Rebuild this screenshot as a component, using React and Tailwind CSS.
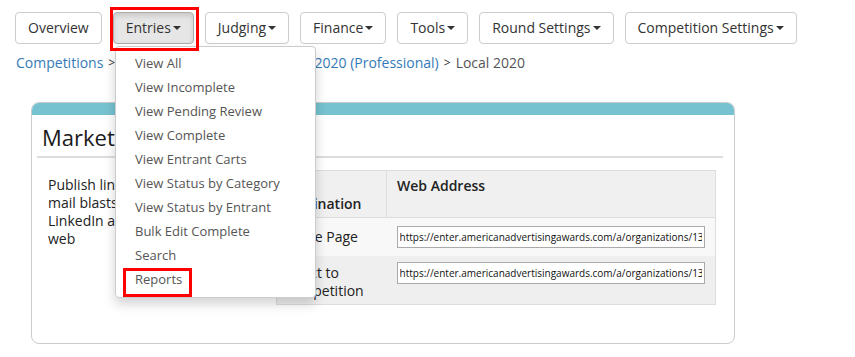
import React from 'react';

const navItems = [
  { label: 'Overview', caret: false },
  { label: 'Entries', caret: true, active: true },
  { label: 'Judging', caret: true },
  { label: 'Finance', caret: true },
  { label: 'Tools', caret: true },
  { label: 'Round Settings', caret: true },
  { label: 'Competition Settings', caret: true },
];

const menuItems = [
  'View All',
  'View Incomplete',
  'View Pending Review',
  'View Complete',
  'View Entrant Carts',
  'View Status by Category',
  'View Status by Entrant',
  'Bulk Edit Complete',
  'Search',
  'Reports',
];

const url = 'https://enter.americanadvertisingawards.com/a/organizations/1342/competitions/2020';

const Caret = () => (
  <span className="inline-block ml-[2px] w-0 h-0 border-l-[4px] border-r-[4px] border-t-[4px] border-l-transparent border-r-transparent border-t-[#333] align-middle" />
);

const Sep = () => <span className="text-[#333] text-[12px] mx-[5px]">&gt;</span>;

const UrlInput = () => (
  <input
    readOnly
    value={url}
    className="block w-full h-[22px] border border-[#aaa] bg-white px-[2px] text-[10px] text-[#111] outline-none"
    style={{ fontFamily: '"Open Sans", sans-serif' }}
  />
);

export default function App() {
  return (
    <div className="relative w-full h-[357px] overflow-hidden bg-white text-[#333] font-['Open_Sans',sans-serif]">
      <div className="flex gap-[11px] pt-3 pl-[15px]">
        {navItems.map((item) => (
          <button
            key={item.label}
            className={`h-8 px-3 rounded-[4px] border text-[14px] leading-5 flex items-center ${
              item.active ? 'bg-[#e6e6e6] border-[#adadad] shadow-[inset_0_3px_5px_rgba(0,0,0,0.125)]' : 'bg-white border-[#ccc]'
            }`}
          >
            {item.label}
            {item.caret && <Caret />}
          </button>
        ))}
      </div>

      <div className="mt-[9px] ml-[16px] text-[14px] leading-5 flex items-center">
        <span className="text-[#337ab7]">Competitions</span>
        <Sep />
        <span className="text-[#337ab7]">American Advertising Awards 2020 (Professional)</span>
        <Sep />
        <span className="text-[#555]">Local 2020</span>
      </div>

      <div className="mt-[29px] ml-[31px] w-[704px] h-[242px] border border-[#ccc] rounded-[8px] overflow-hidden">
        <div className="h-3 bg-[#76c2d0]" />
        <div className="pl-[5px] pr-[11px]">
          <h2 className="pl-[5px] pt-[8px] pb-[5px] text-[22px] leading-[28px] text-[#1a1a1a]">Market Your Competition</h2>
          <div className="border-t-2 border-[#ddd]" />
          <div className="flex pt-[12px]">
            <p className="w-[239px] shrink-0 pl-[11px] pt-[6px] text-[14px] leading-[18px] text-[#222] whitespace-nowrap">
              Publish links on your site, in e-
              <br />
              mail blasts, Facebook, Twitter,
              <br />
              LinkedIn and anywhere on the
              <br />
              web
            </p>
            <table className="w-[440px] border border-[#ddd] border-collapse text-[14px] text-[#222]">
              <thead>
                <tr className="bg-[#f0f0f0] h-[47px]">
                  <th className="w-[110px] border border-[#ddd] px-[6px] pb-[4px] align-bottom text-left font-semibold leading-[18px]">
                    Link Destination
                  </th>
                  <th className="border border-[#ddd] px-[10px] pt-[6px] align-top text-left font-semibold leading-[18px]">
                    Web Address
                  </th>
                </tr>
              </thead>
              <tbody>
                <tr className="bg-[#f8f8f8] h-[38px]">
                  <td className="px-[6px] leading-[18px]">Home Page</td>
                  <td className="px-[10px] py-[7px]">
                    <UrlInput />
                  </td>
                </tr>
                <tr className="bg-[#efefef] h-[49px]">
                  <td className="px-[6px] pt-[8px] pb-[4px] align-top leading-[18px]">Direct to Competition</td>
                  <td className="px-[10px] pt-[6px] align-top">
                    <UrlInput />
                  </td>
                </tr>
              </tbody>
            </table>
          </div>
        </div>
      </div>

      <div className="absolute left-[115px] top-[46px] w-[201px] pt-[4px] pb-[6px] bg-white border border-[#ccc] rounded-[4px] shadow-[0_6px_12px_rgba(0,0,0,0.175)]">
        {menuItems.map((m) => (
          <div key={m} className="h-6 leading-6 pl-[19px] text-[13px] text-[#555]">
            {m}
          </div>
        ))}
      </div>

      <div className="absolute left-[110px] top-[7px] w-[89px] h-[44px] border-[3px] border-[#f00]" />
      <div className="absolute left-[123px] top-[268px] w-[69px] h-[29px] border-[3px] border-[#f00]" />
    </div>
  );
}
